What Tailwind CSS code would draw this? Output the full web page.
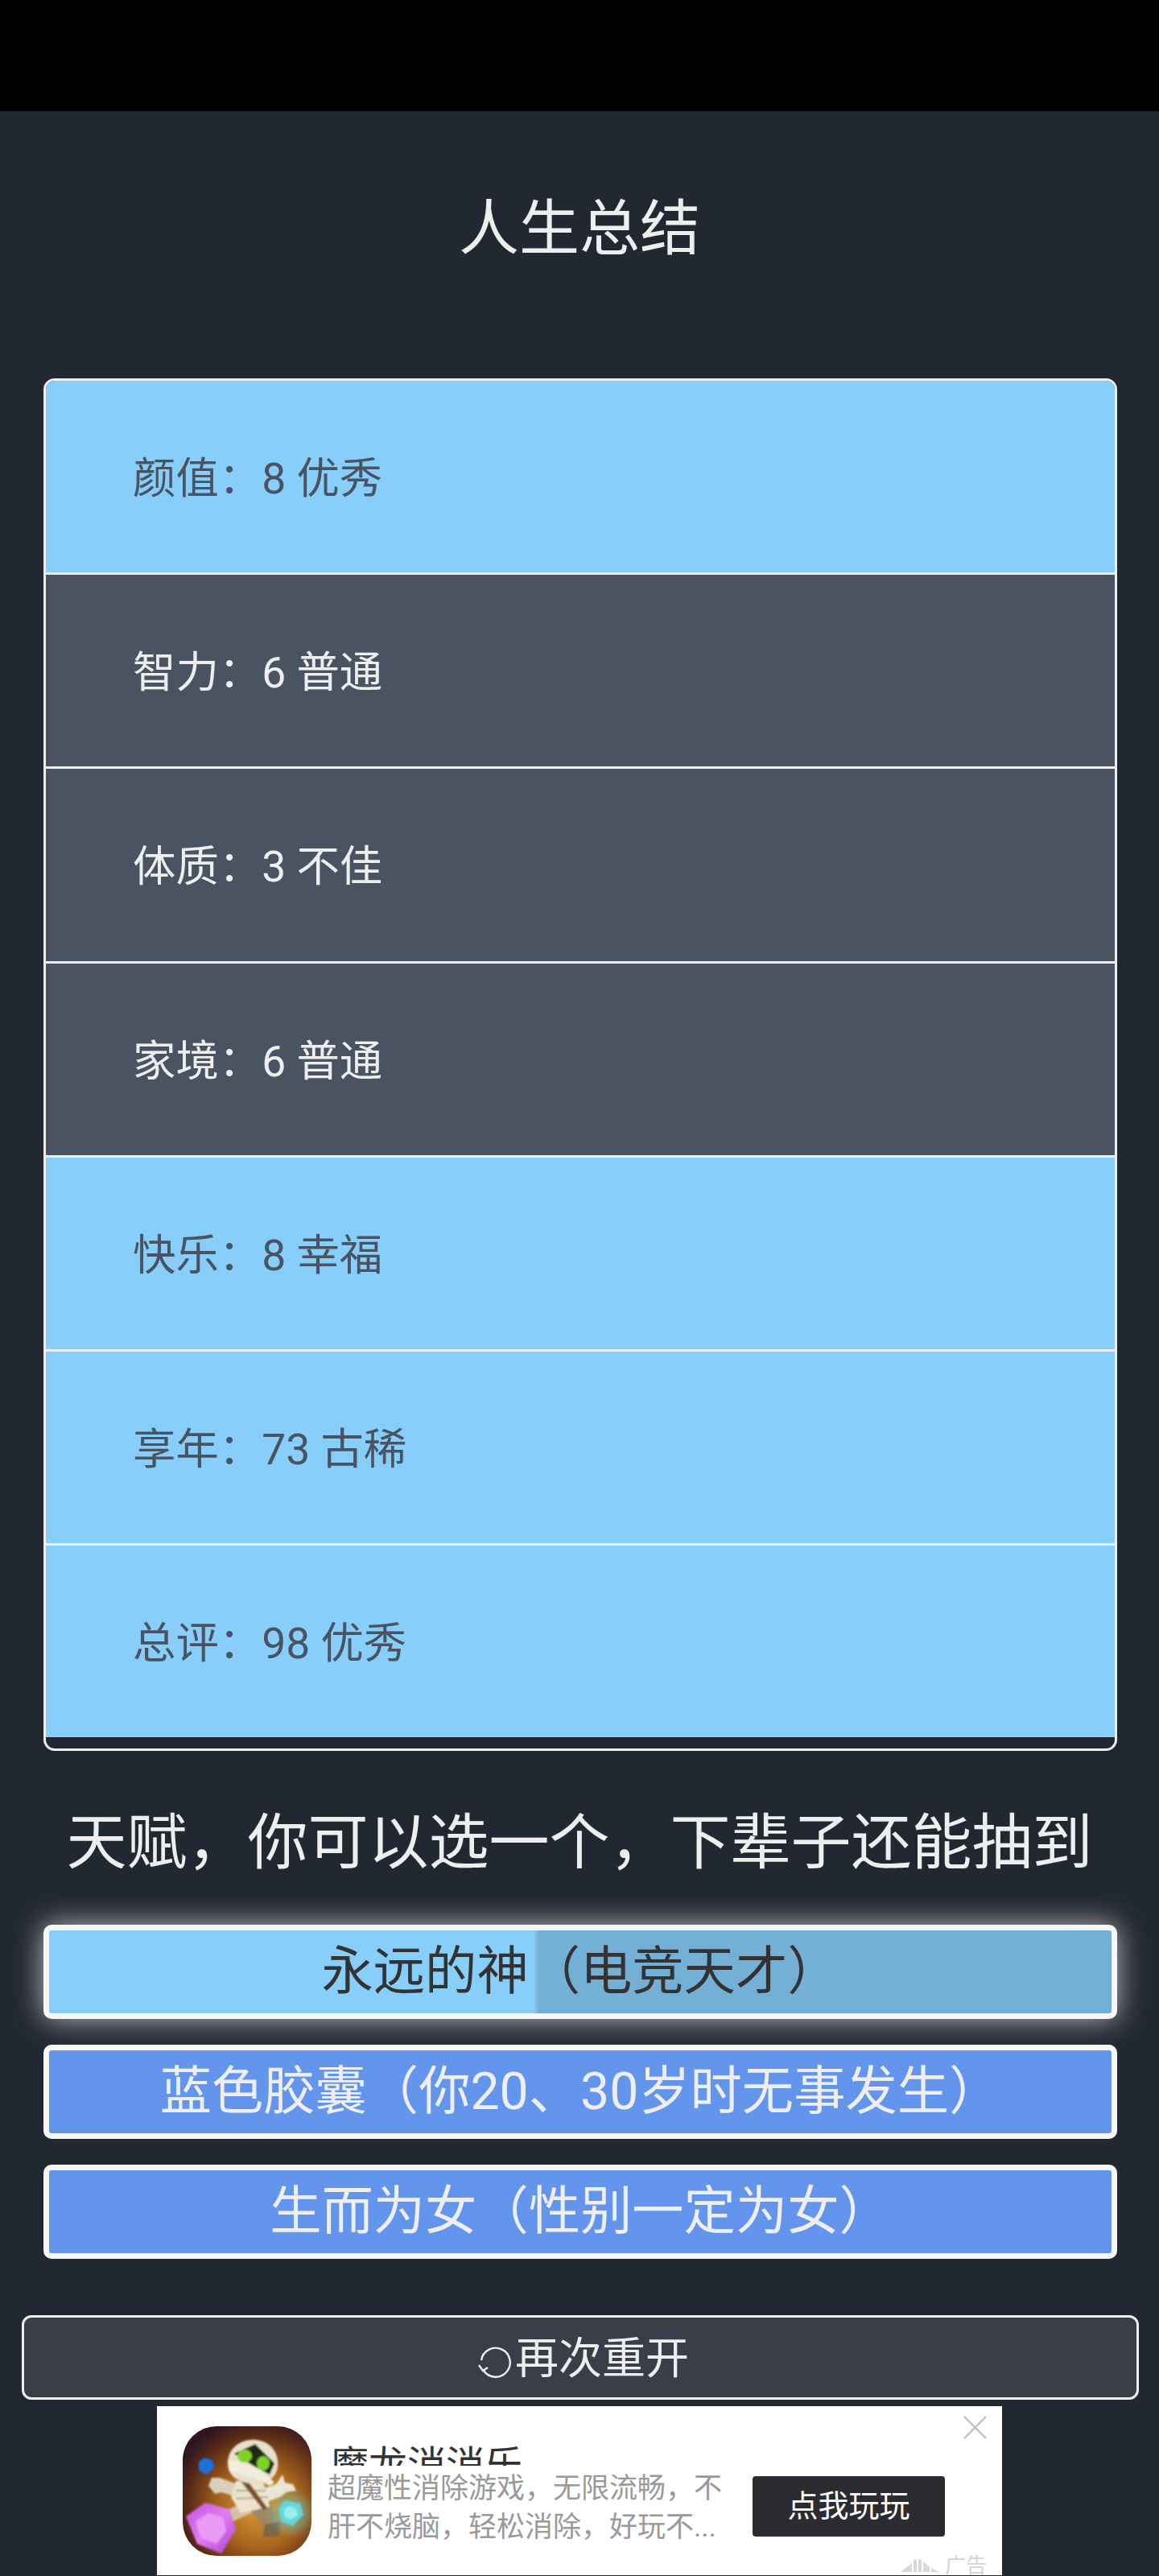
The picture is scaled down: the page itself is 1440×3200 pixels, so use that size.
<!DOCTYPE html>
<html lang="zh">
    <head>
        <meta charset="utf-8">
        <title>人生总结</title>
        <script src="https://cdn.jsdelivr.net/npm/@tailwindcss/browser@4"></script>
    </head>

    <body class="bg-[#222831] font-['Roboto','Noto_Sans_CJK_SC',sans-serif]">
        <div class="h-[3200px] overflow-hidden">
            <!-- top bar -->
            <div class="h-[138px] bg-black"></div>

            <h1 class="h-[284px] pt-[102px] text-center text-[75px] leading-[88px] font-normal text-[#eeeeee]">人生总结</h1>

            <!-- summary list -->
            <div class="mt-[48px] mr-[52px] ml-[54px] overflow-hidden rounded-[14px] border-[3px] border-[#eeeeee] pb-[14px] text-[53.4px]">
                <div class="flex h-[241.2px] items-center border-b-[3px] border-[#eeeeee] bg-[#87cefa] pt-[6px] pl-[108px] text-[#4a5362]">颜值：8 优秀</div>
                <div class="flex h-[241.2px] items-center border-b-[3px] border-[#eeeeee] bg-[#4a5362] pt-[6px] pl-[108px] text-[#eeeeee]">智力：6 普通</div>
                <div class="flex h-[241.2px] items-center border-b-[3px] border-[#eeeeee] bg-[#4a5362] pt-[6px] pl-[108px] text-[#eeeeee]">体质：3 不佳</div>
                <div class="flex h-[241.2px] items-center border-b-[3px] border-[#eeeeee] bg-[#4a5362] pt-[6px] pl-[108px] text-[#eeeeee]">家境：6 普通</div>
                <div class="flex h-[241.2px] items-center border-b-[3px] border-[#eeeeee] bg-[#87cefa] pt-[6px] pl-[108px] text-[#4a5362]">快乐：8 幸福</div>
                <div class="flex h-[241.2px] items-center border-b-[3px] border-[#eeeeee] bg-[#87cefa] pt-[6px] pl-[108px] text-[#4a5362]">享年：73 古稀</div>
                <div class="flex h-[238px] items-center bg-[#87cefa] pt-[6px] pl-[108px] text-[#4a5362]">总评：98 优秀</div>
            </div>

            <h2 class="mt-[69px] text-center text-[75px] leading-[90px] font-normal text-[#eeeeee]">天赋，你可以选一个，下辈子还能抽到</h2>

            <!-- talents -->
            <div class="mt-[57px] mr-[52px] ml-[54px] flex flex-col gap-[32px] text-[64.3px]">
                <div class="flex h-[117px] items-center justify-center rounded-[10px] border-[7px] border-[#f7f7f7] bg-[linear-gradient(90deg,#87cefa_602px,#74b0d6_608px)] text-[#333333] shadow-[0_0_36px_rgba(255,255,255,0.7)]">永远的神（电竞天才）</div>
                <div class="flex h-[117px] items-center justify-center rounded-[10px] border-[7px] border-[#f7f7f7] bg-[#6495ed] text-[#eeeeee]">蓝色胶囊（你20、30岁时无事发生）</div>
                <div class="flex h-[117px] items-center justify-center rounded-[10px] border-[7px] border-[#f7f7f7] bg-[#6495ed] text-[#eeeeee]">生而为女（性别一定为女）</div>
            </div>

            <!-- restart -->
            <div class="mt-[70px] mr-[25px] ml-[27px] flex h-[105px] items-center justify-center gap-[4px] rounded-[12px] border-[3px] border-[#eeeeee] bg-[#3a3e48] pt-[4px] pl-[8px] text-[54px] text-[#eeeeee]">
                <svg class="mt-[10px] h-[42px] w-[42px]" viewBox="0 0 42 42" fill="none" stroke="#eeeeee" stroke-width="2.4">
                    <path d="M4 17a18 18 0 1 1 3 13"/>
                    <path d="M1 23l5 7 6-4"/>
                </svg>
                <span>再次重开</span>
            </div>

            <!-- ad -->
            <div class="relative mx-auto mt-[8px] flex h-[210px] w-[1050px] bg-white">
                <svg class="mt-[25px] ml-[32px] h-[161px] w-[160px] shrink-0 rounded-[42px]" viewBox="0 0 160 161">
                    <defs>
                        <radialGradient id="bg" cx="60%" cy="62%" r="70%">
                            <stop offset="0" stop-color="#dd9e33"/>
                            <stop offset="0.45" stop-color="#a8651d"/>
                            <stop offset="0.8" stop-color="#5a2a17"/>
                            <stop offset="1" stop-color="#2e1622"/>
                        </radialGradient>
                        <linearGradient id="purple" x1="0" y1="0" x2="1" y2="1">
                            <stop offset="0" stop-color="#c252e0"/>
                            <stop offset="0.5" stop-color="#e37cf2"/>
                            <stop offset="1" stop-color="#b03fd6"/>
                        </linearGradient>
                        <filter id="soft"><feGaussianBlur stdDeviation="1"/></filter>
                        <filter id="glow"><feGaussianBlur stdDeviation="6"/></filter>
                    </defs>
                    <rect width="160" height="161" fill="url(#bg)"/>
                    <g filter="url(#soft)">
                        <!-- legs -->
                        <path d="M72 96L52 106l6 14 32-14z" fill="#d2c2a4"/>
                        <path d="M84 104l16 22 20-6-12-26z" fill="#a08662"/>
                        <path d="M102 122l-2 16 20-2 2-18z" fill="#7f6547"/>
                        <!-- arms -->
                        <path d="M68 72L46 64l-10 0-4 10 8 10 8-2 20 6z" fill="#d8d0bd"/>
                        <path d="M98 78l18-6 8-12 3 10 10 2 4 8-12 2-8 6-22 8z" fill="#ece6d6"/>
                        <!-- body -->
                        <path d="M66 68l34 0 8 32-36 8-12-20z" fill="#ebe3cf"/>
                        <path d="M66 80l38 0M66 90l40-2" stroke="#b8a98c" stroke-width="2" fill="none"/>
                        <path d="M72 68l28 36 5-3-24-33z" fill="#7a5228"/>
                        <!-- head -->
                        <path d="M56 46C56 26 74 15 92 17c18 2 28 17 26 33-1 14-14 22-32 21C68 70 56 61 56 46z" fill="#e7e0cc"/>
                        <path d="M64 34l26-12 24 24-6 14-22-12z" fill="#1d2a12"/>
                        <ellipse cx="77" cy="37" rx="9" ry="8" fill="#7ed321"/>
                        <ellipse cx="100" cy="46" rx="8" ry="9" fill="#7ed321"/>
                        <path d="M56 42c18 0 44 12 58 28l-6 4C92 64 72 58 58 56z" fill="#f2ecdb"/>
                    </g>
                    <circle cx="135" cy="108" r="24" fill="#62e0e6" opacity="0.4" filter="url(#glow)"/>
                    <g filter="url(#soft)">
                        <polygon points="27,39 37,42 39,52 30,60 20,55 20,44" fill="#1f6fe0"/>
                        <polygon points="127,92 146,96 150,110 136,124 122,118 119,102" fill="#61d8dc"/>
                        <polygon points="132,99 141,102 143,110 135,116 127,113 126,104" fill="#9cecea"/>
                        <polygon points="28,95 58,103 66,128 48,158 18,146 4,112" fill="url(#purple)"/>
                        <polygon points="32,108 50,113 54,130 42,146 22,138 16,118" fill="#e79bf5"/>
                    </g>
                </svg>

                <div class="ml-[20px] w-[500px] shrink-0">
                    <div class="mt-[43px] h-[31px] overflow-hidden pl-[3px] text-[48px] leading-[62px] text-[#333333]">魔龙消消乐</div>
                    <p class="mt-[5px] text-[35px] leading-[48px] text-[#999999]">超魔性消除游戏，无限流畅，不<br>肝不烧脑，轻松消除，好玩不...</p>
                </div>

                <div class="mt-[87px] ml-[28px] flex h-[75px] w-[239px] items-center justify-center rounded-[4px] bg-[#2b2c30] text-[38px] text-white">点我玩玩</div>

                <svg class="absolute top-[12px] right-[19px] h-[29px] w-[29px]" viewBox="0 0 29 29" stroke="#bbbbbb" stroke-width="2.2">
                    <path d="M1 1l27 27M28 1L1 28"/>
                </svg>

                <!-- ad mark -->
                <div class="absolute right-[19px] bottom-[-3px] flex items-center gap-[7px] text-[26px] leading-[30px] text-[#d4d4d4]">
                    <svg class="h-[17px] w-[48px]" viewBox="0 0 48 17" fill="#d8d8d8">
                        <polygon points="0,16 14,5 14,16"/>
                        <polygon points="16,16 16,2 20,0 20,16"/>
                        <polygon points="22,16 22,0 26,1 26,16"/>
                        <polygon points="28,16 28,3 36,10 36,16"/>
                        <polygon points="38,16 38,11 48,16"/>
                    </svg>
                    <span>广告</span>
                </div>
            </div>
        </div>
    </body>
</html>
